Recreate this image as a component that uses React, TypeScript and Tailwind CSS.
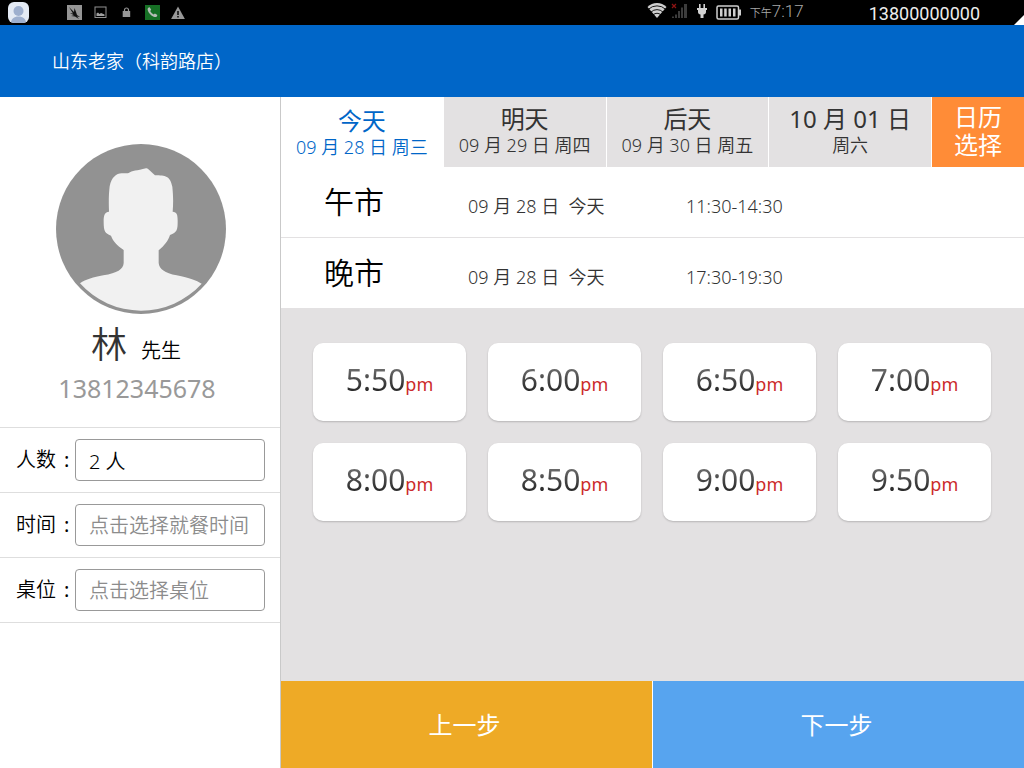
import React, { useState } from "react";

type day_type = {
  title: string;
  subtitle: string;
};

type meal_type = {
  name: string;
  date: string;
  hours: string;
};

const days: day_type[] = [
  { title: "今天", subtitle: "09 月 28 日 周三" },
  { title: "明天", subtitle: "09 月 29 日 周四" },
  { title: "后天", subtitle: "09 月 30 日 周五" },
  { title: "10 月 01 日", subtitle: "周六" },
];

const meals: meal_type[] = [
  { name: "午市", date: "09 月 28 日  今天", hours: "11:30-14:30" },
  { name: "晚市", date: "09 月 28 日  今天", hours: "17:30-19:30" },
];

const slots: string[] = [
  "5:50",
  "6:00",
  "6:50",
  "7:00",
  "8:00",
  "8:50",
  "9:00",
  "9:50",
];

const StatusBar: React.FC = () => {
  return (
    <div className="relative flex h-[25px] items-center bg-black pl-2 pr-11 font-['Roboto','Noto_Sans_CJK_SC',sans-serif]">
      {/* Notification icons */}
      <div className="flex items-center">
        <svg width="21" height="21" viewBox="0 0 21 21">
          <clipPath id="user-badge">
            <rect width="21" height="21" rx="6" />
          </clipPath>
          <g clipPath="url(#user-badge)">
            <rect width="21" height="21" fill="#e3eaf4" />
            <circle cx="10.5" cy="9" r="5" fill="#9dafce" />
            <path d="M3 21c0-4 3-6.500 7.500-6.500S18 17 18 21z" fill="#9dafce" />
          </g>
        </svg>
        <svg className="ml-[38px]" width="15" height="15" viewBox="0 0 15 15">
          <rect width="15" height="15" fill="#959595" />
          <path
            d="M2 2l5 5 .5-4L9 7l1 3 3 2-3-.5L12 14 8 11.500 4 11l3-.8L3 8l3 .5z"
            fill="#111"
          />
        </svg>
        <svg className="ml-3" width="13" height="13" viewBox="0 0 13 13">
          <rect x="1" y="1" width="11" height="10.500" fill="none" stroke="#929292" />
          <path d="M2.500 10V7.500L4 6.500l1.500 1.500L7 7l3.500 1.500V10z" fill="#a0a0a0" />
        </svg>
        <svg className="ml-[15px]" width="9" height="11" viewBox="0 0 9 11">
          <rect x="0.7" y="4" width="7.500" height="6" fill="#969696" />
          <path d="M2.500 4.500V3a2 2 0 0 1 4 0v1.500" fill="none" stroke="#969696" strokeWidth="1.200" />
        </svg>
        <svg className="ml-[14px]" width="15" height="15" viewBox="0 0 15 15">
          <rect width="15" height="15" fill="#167025" />
          <path
            d="M3.200 2.800l1.500-.6 1.500 2.600-1 1.100c.8 1.600 1.900 2.700 3.500 3.500l1.200-1 2.500 1.500-.6 1.600c-1 1-2.900.6-5-.8C4.500 9 2.800 6.500 2.600 4.500c0-.7.2-1.300.6-1.700z"
            fill="#b5bcb5"
          />
        </svg>
        <svg className="ml-[11px]" width="14" height="14" viewBox="0 0 14 14">
          <path d="M7 .5l6.900 12.500H.1z" fill="#989898" />
          <path d="M6.200 5h1.600v4H6.200zM6.200 10h1.600v1.500H6.200z" fill="#111" />
        </svg>
      </div>

      {/* System icons and clock */}
      <div className="ml-auto flex items-center">
        <svg className="-translate-y-0.5" width="20" height="15" viewBox="0 0 20 15">
          <path d="M10 15L.5 4a13.500 13.500 0 0 1 19 0z" fill="#cfcfcf" />
          <g fill="none" stroke="#000" strokeWidth=".9">
            <path d="M1.500 6.200a12.500 12.500 0 0 1 17 0" />
            <path d="M4 9.100a8.500 8.500 0 0 1 12 0" />
            <path d="M6.200 11.800a5.500 5.500 0 0 1 7.600 0" />
          </g>
        </svg>
        <svg className="ml-1 -translate-y-0.5" width="17" height="16" viewBox="0 0 17 16">
          <path
            d="M1 13.500h2V15H1zM4 11.500h2V15H4zM7 8h2v7H7zM10 4.500h2V15h-2zM13 1h3v14h-3z"
            fill="#3c3c3c"
          />
          <path d="M1 1l4 4M5 1L1 5" stroke="#8f1414" strokeWidth="1.200" />
        </svg>
        <svg className="ml-2 -translate-y-0.5" width="12" height="15" viewBox="0 0 12 15">
          <path
            d="M3 1h1.600v4h2.800V1H9v4h2v2h-1v2c0 1.500-1 2.200-2.500 2.500V15h-3v-3.500C3 11.200 2 10.500 2 9V7H1V5h2z"
            fill="#d2d2d2"
          />
        </svg>
        <svg className="ml-2" width="26" height="15" viewBox="0 0 26 15">
          <rect x="1" y="1" width="21.500" height="13" rx="1.500" fill="none" stroke="#d0d0d0" strokeWidth="1.500" />
          <path d="M23 4.500h2v6h-2z" fill="#d0d0d0" />
          <path d="M4 3.500h2.500v8H4zM8.200 3.500h2.500v8H8.200zM12.500 3.500H15v8h-2.500zM17 3.500h2.500v8H17z" fill="#d0d0d0" />
        </svg>
        <span className="ml-2 flex items-baseline text-[#a8a8a8]">
          <span className="text-[11px] leading-6">下午</span>
          <span className="text-[17px] font-light leading-6">7:17</span>
        </span>
        <span className="ml-[65px] pt-0.5 text-[18px] font-normal leading-5 text-[#ededed]">
          13800000000
        </span>
      </div>
      <svg className="absolute bottom-0 right-0" width="10" height="10" viewBox="0 0 10 10">
        <path d="M10 0v10H0z" fill="#fff" />
      </svg>
    </div>
  );
};

const Avatar: React.FC = () => {
  return (
    <svg width="170" height="170" viewBox="0 0 510 510">
      <circle cx="255" cy="255" r="255" fill="#929292" />
      <path
        d="M270 73c5 0 10 5 27 21 32 0 45 2 52 34 3 30 3 50 1 75 12 2 15 6 15 28 0 28-2 34-23 42-6 18-16 31-34 46v38c2 18 18 30 54 37 40 8 58 15 75 25a245 245 0 0 1-365-1c18-12 40-19 70-24 42-7 60-18 61-37v-39c-20-14-32-26-38-43-18-8-22-12-22-42 0-22 4-28 16-30-1-30-1-50 2-76 6-28 20-38 36-39 10-1 16 1 21-1 10-7 25-7 52-14z"
        fill="#f1f1f1"
      />
    </svg>
  );
};

type FieldProps = {
  id: string;
  label: string;
  value?: string;
  placeholder?: string;
};

const Field: React.FC<FieldProps> = ({ id, label, value, placeholder }) => {
  return (
    <div className="flex h-[65px] items-center border-b border-[#dedede] pl-4 pr-[15px]">
      <label htmlFor={id} className="w-[59px] shrink-0 text-xl text-black">
        {label}
        <span className="ml-2 font-normal">:</span>
      </label>
      <input
        id={id}
        type="text"
        defaultValue={value}
        placeholder={placeholder}
        className="h-[42px] w-full min-w-0 rounded border border-[#999] px-[13px] text-xl text-black placeholder:text-[#8c8c8c] focus:outline-none"
      />
    </div>
  );
};

const App: React.FC = () => {
  const [activeDay, setActiveDay] = useState<number>(0);
  const [activeSlot, setActiveSlot] = useState<string | null>(null);

  return (
    <div className="flex min-h-screen flex-col bg-white font-['Noto_Sans','Noto_Sans_CJK_SC',sans-serif] font-[350]">
      <StatusBar />

      {/* Header */}
      <header className="flex h-[72px] items-center bg-[#0066c8] px-[52px]">
        <h1 className="text-lg font-[350] text-white">山东老家（科韵路店）</h1>
      </header>

      <div className="flex flex-1">
        {/* Guest */}
        <aside className="w-[281px] shrink-0 border-r border-[#c9c9c9]">
          <div className="flex h-[331px] flex-col items-center border-b border-[#dedede] pl-0.5 pt-[47px]">
            <Avatar />
            <div className="flex items-baseline gap-3.5 pr-2.5">
              <span className="text-4xl leading-[62px] text-[#333]">林</span>
              <span className="text-xl text-black">先生</span>
            </div>
            <span className="pr-2 text-[25px] font-normal leading-6 text-[#999]">13812345678</span>
          </div>
          <Field id="people" label="人数" value="2 人" />
          <Field id="time" label="时间" placeholder="点击选择就餐时间" />
          <Field id="table" label="桌位" placeholder="点击选择桌位" />
        </aside>

        <main className="flex min-w-0 flex-1 flex-col">
          {/* Days */}
          <div className="flex h-[70px]">
            {days.map((day, index) => (
              <button
                key={day.title}
                onClick={() => setActiveDay(index)}
                className={`flex flex-1 flex-col items-center border-r border-white ${
                  index === activeDay
                    ? "bg-white pt-2.5 text-[#0066c8]"
                    : "bg-[#e3e1e2] pt-2 text-[#333]"
                }`}
              >
                <span className="text-2xl font-normal leading-7">{day.title}</span>
                <span className="whitespace-nowrap text-lg leading-6">{day.subtitle}</span>
              </button>
            ))}
            <button className="w-[92px] shrink-0 bg-[#ff8c37] px-5 pb-0.5 text-2xl font-normal leading-7 text-white">
              日历选择
            </button>
          </div>

          {/* Meals */}
          <ul>
            {meals.map((meal) => (
              <li
                key={meal.name}
                className="flex h-[71px] items-baseline whitespace-pre border-b border-[#e3e1e2] pl-[43px] pt-2 text-lg text-[#333]"
              >
                <span className="w-[144px] text-3xl leading-[54px] text-black">{meal.name}</span>
                <span className="w-[218px]">{meal.date}</span>
                <span>{meal.hours}</span>
              </li>
            ))}
          </ul>

          {/* Time slots */}
          <div className="flex-1 bg-[#e3e1e2] pb-8 pl-8 pr-[33px] pt-[34px]">
            <div className="grid grid-cols-4 gap-[22px]">
              {slots.map((slot) => (
                <button
                  key={slot}
                  onClick={() => setActiveSlot(slot)}
                  aria-pressed={activeSlot === slot}
                  className="flex h-[78px] items-baseline justify-center rounded-[10px] bg-white pt-[17px] font-normal shadow-[0_1px_2px_rgba(0,0,0,0.2)]"
                >
                  <span className="bg-linear-to-b from-[#888] to-[#111] bg-clip-text text-[30px] leading-10 text-transparent">
                    {slot}
                  </span>
                  <span className="text-lg text-[#cc2b2b]">pm</span>
                </button>
              ))}
            </div>
          </div>

          {/* Steps */}
          <div className="flex h-[87px] gap-px bg-white text-2xl text-white">
            <button className="flex-1 bg-[#eeaa26] pr-1 font-normal">上一步</button>
            <button className="flex-1 bg-[#57a4ef] pr-1 font-normal">下一步</button>
          </div>
        </main>
      </div>
    </div>
  );
};

export default App;
